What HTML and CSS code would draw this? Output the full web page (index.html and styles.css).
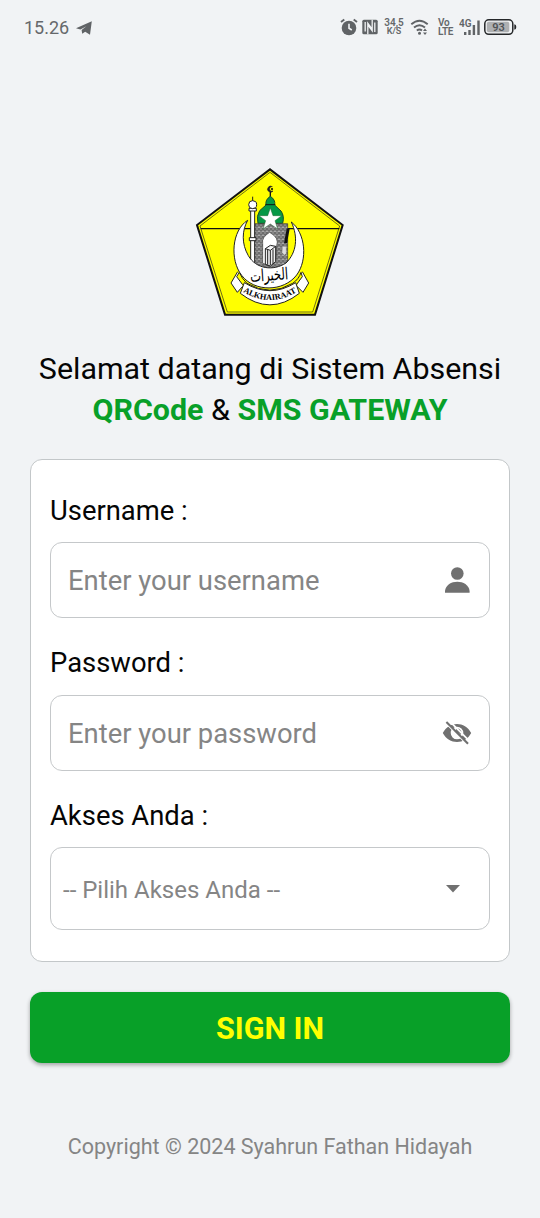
FILE: index.html
```html
<!DOCTYPE html>
<html lang="id">
<head>
<meta charset="utf-8">
<title>Sistem Absensi</title>
<link rel="stylesheet" href="styles.css">
</head>
<body>
<header class="status">
  <span class="clock">15.26</span>
  <svg class="plane" width="16" height="14" viewBox="0 0 16 14"><path d="M15.8 .3 14 13.7 9.2 10.7 6.2 12.8 5.6 9 10.4 5.3 4.4 8.6 0 7.2Z"/></svg>
  <div class="status-icons">
    <svg width="18" height="18" viewBox="0 0 18 18"><circle cx="9" cy="10" r="7.3"/><path class="line" d="M1 4 4.3 1.4M17 4 13.7 1.4"/><path class="cut" d="M9 5.8V10.3L11.8 12"/></svg>
    <svg class="nfc" width="16" height="16" viewBox="0 0 16 16"><rect x=".3" y=".8" width="15.4" height="14.4" rx="1.5"/><path class="cut thin" d="M5.8 15.2V4.2L10 10M3.2 3V12.6M10.2 .8V11.8L6 6M12.8 3.4V13"/></svg>
    <span class="speed"><b>34,5</b><b class="unit">K/S</b></span>
    <svg class="wifi" width="20" height="17" viewBox="0 0 20 17"><path class="line" d="M1.3 5.3Q9.5-1.8 17.7 5.3M4 8.5Q9.5 3.8 15 8.5M6.8 11.5Q9.5 9.5 12 11.5"/><circle cx="9.5" cy="14.2" r="1.5"/><path d="M15 9.5 17 12H13ZM15 16 13 13.5H17Z"/></svg>
    <span class="volte"><b>Vo</b><b>LTE</b></span>
    <svg class="signal" width="22" height="18" viewBox="0 0 22 18"><text x="0" y="9">4G</text><path d="M5 14h2.4v3H5ZM9.3 12h2.4v5H9.3ZM13.7 7H16.1v10h-2.4ZM18.3 2.5h2.4V17h-2.4Z"/></svg>
    <svg class="battery" width="33" height="18" viewBox="0 0 33 18"><rect class="shell" x=".8" y="1.8" width="28" height="14.5" rx="4"/><rect class="charge" x="2.8" y="3.8" width="22.5" height="10.5" rx="2"/><path class="tip" d="M30.3 6.3Q32.3 6.5 32.3 9T30.3 11.7Z"/><text x="14.5" y="13" text-anchor="middle">93</text></svg>
  </div>
</header>
<main class="login">
  <svg class="logo" viewBox="0 0 480 480" role="img" aria-label="Alkhairaat">
    <defs>
      <pattern id="brick" width="12" height="12" patternUnits="userSpaceOnUse"><rect width="12" height="12" fill="#aaa"/><path d="M0 0H12M0 6H12M3 0V6M9 6V12" stroke="#333" stroke-width="1.8"/></pattern>
      <path id="motto" d="M151 391Q240 449 328 391"/>
    </defs>
    <path d="M240 28 458 195 375 464H105L21 195Z" fill="#ff0" stroke="#111" stroke-width="6"/>
    <path d="M240 37 449 198 368 456H112L30 198Z" fill="none" stroke="#222" stroke-width="2"/>
    <path d="M32 206H448" stroke="#111" stroke-width="4"/>
    <path d="M247 80A9 9 0 1 0 249 93 7 7 0 1 1 247 80Z" fill="#222" stroke="#222" stroke-width="2"/><circle cx="246" cy="87" r="3"/><path d="M241 96V113" stroke="#111" stroke-width="4"/>
    <path d="M228 135Q225 119 241 109 257 119 254 135L273 153Q284 168 278 190H204Q198 168 209 152Z" fill="#079846" stroke="#174c29" stroke-width="3"/>
    <path d="M226 134H256" stroke="#111" stroke-width="3"/>
    <path d="M195 191H293V324H190Z" fill="url(#brick)" stroke="#333" stroke-width="2"/>
    <path d="m241 144 8 23h26l-20 15 8 25-22-15-22 15 8-25-20-15h26Z" fill="#fff" stroke="#263" stroke-width="1.5"/>
    <path d="M239 217Q269 234 260 257L256 307 242 318 218 310V251Q214 232 239 217Z" fill="#fff" stroke="#333" stroke-width="2"/>
    <path d="m226 266 15-10 16 3v46l-16 13-15-5ZM226 266l15 5 16-12M241 271v44M233 268v46M249 268v44" fill="#eee" stroke="#222" stroke-width="3"/>
    <path d="M290 206H299L291 250H282Z" fill="#111"/><path d="M277 259H289V280L283 286 276 278Z" fill="#ddd" stroke="#555"/>
    <path d="M182 151H194V324H182Z" fill="#fff" stroke="#222" stroke-width="3"/>
    <path d="M188 110V125M177 145H199V153H177ZM178 233H198V242H178Z" fill="#fff" stroke="#222" stroke-width="3"/><circle cx="188" cy="134" r="12" fill="#fff" stroke="#222" stroke-width="3"/>
    <path d="M143 335 123 369 142 397 158 379M337 335 356 369 339 397 321 379" fill="#fff" stroke="#222" stroke-width="3"/>
    <path d="M148 337Q156 357 171 370 239 411 308 370 327 357 333 337L337 350 320 373Q239 425 157 373L140 350Z" fill="#ff0" stroke="#222" stroke-width="3"/>
    <path d="M173 181C125 211 119 300 155 346 193 397 281 396 320 345 354 299 346 219 304 186 325 231 320 278 288 309 250 334 198 327 175 287 154 251 156 211 173 181Z" fill="#fff" stroke="#222" stroke-width="3"/>
    <path d="M163 368Q240 416 317 368L328 400Q240 469 151 400Z" fill="#fff" stroke="#222" stroke-width="3"/>
    <text class="arabic" x="238" y="362" text-anchor="middle" textLength="114" lengthAdjust="spacingAndGlyphs" transform="rotate(-4 238 355)">الخيرات</text>
    <text class="motto"><textPath href="#motto" startOffset="50%" text-anchor="middle">ALKHAIRAAT</textPath></text>
  </svg>
  <h1 class="welcome"><span class="welcome-line">Selamat datang di Sistem Absensi</span><span class="product"><strong>QRCode</strong> &amp; <strong>SMS GATEWAY</strong></span></h1>
  <form class="card">
    <div class="label">Username :</div>
    <div class="field"><span class="username">Enter your username</span><svg width="30" height="30" viewBox="0 0 30 30"><circle cx="15.3" cy="8.5" r="6.3"/><path d="M3 27.8V26C3.7 19.8 9.3 16.7 15.3 16.7S26.9 19.8 27.6 26V27.8Z"/></svg></div>
    <div class="label">Password :</div>
    <div class="field"><span class="password">Enter your password</span><svg width="30" height="30" viewBox="0 0 30 30"><path fill-rule="evenodd" d="M.8 15C7 3 23 3 29.2 15 23 27 7 27 .8 15ZM15 8.7A6.3 6.3 0 1 0 15 21.3 6.3 6.3 0 1 0 15 8.7Z"/><path d="M15 10.5A4.5 4.5 0 0 1 19.5 15.5L17.8 17.3Q18 15 15.5 14.5 13.5 13.8 14 10.6Z"/><path class="gap" d="M3 4.2 25.5 26.7M5.8 1.4 28.3 23.9"/><path class="slash" d="M4.4 4.1 26 25.7"/></svg></div>
    <div class="label">Akses Anda :</div>
    <div class="field select"><span class="choice">-- Pilih Akses Anda --</span><svg width="14" height="8" viewBox="0 0 14 8"><path d="M0 0H14L7 7.5Z"/></svg></div>
  </form>
  <button class="submit" type="button">SIGN IN</button>
  <footer class="copyright">Copyright © 2024 Syahrun Fathan Hidayah</footer>
</main>
</body>
</html>
```
FILE: styles.css
```css
* { box-sizing: border-box; }
body { margin: 0; height: 1218px; background: #f1f3f5; font-family: Roboto, sans-serif; color: #050505; }
svg { display: block; }
.status { height: 56px; display: flex; align-items: center; padding: 0 23px 2px 24px; color: #65686b; fill: #606366; }
.clock { font-size: 18px; padding-top: 1px; }
.plane { margin: 1px 0 0 7px; }
.status-icons { display: flex; align-items: center; margin-left: auto; }
.line { fill: none; stroke: #606366; stroke-width: 1.9; }
.cut { fill: none; stroke: #f1f3f5; stroke-width: 1.6; }
.thin { stroke-width: 1.3; }
.nfc { margin-left: 4px; }
.speed, .volte { display: grid; text-align: center; font-size: 10px; line-height: 9px; font-weight: 600; }
.speed b, .volte b { font-weight: 600; }
.speed { margin-left: 6px; width: 20px; }
.speed .unit { font-size: 9px; }
.wifi { margin-left: 6px; }
.volte { margin-left: 8px; width: 16px; text-align: left; letter-spacing: -.3px; }
.signal { margin-left: 5px; }
.signal text { font-size: 10px; font-weight: 600; }
.battery { margin-left: 3px; }
.shell { fill: #f1f3f5; stroke: #252729; stroke-width: 1.5; }
.charge { fill: #aeb0b2; }
.tip { fill: #252729; }
.battery text { font-size: 11px; font-weight: 600; fill: #505356; }
.login { padding: 104px 30px 0; display: flex; flex-direction: column; align-items: center; }
.logo { width: 160px; height: 160px; }
.arabic { font: 50px "DejaVu Sans", sans-serif; }
.motto { font: bold 25px "Liberation Serif", serif; }
.welcome { margin: 28px 0 0; font-size: 30.4px; line-height: 41px; font-weight: 400; display: grid; text-align: center; white-space: nowrap; }
.welcome strong { color: #08a028; font-weight: 700; }
.card { width: 480px; height: 503px; margin-top: 29px; padding: 30px 19px 0; border: 1px solid #c3c7c9; border-radius: 12px; background: #fff; }
.label { height: 52px; padding-top: 0.5px; font-size: 27.4px; line-height: 41px; }
.field { height: 76px; margin-bottom: 24.5px; padding: 0 17px; border: 1px solid #c5c8ca; border-radius: 12px; display: flex; align-items: center; justify-content: space-between; color: #858585; font-size: 27.4px; fill: #707070; white-space: nowrap; }
.gap { stroke: #fff; stroke-width: 1.8; fill: none; }
.slash { stroke: #707070; stroke-width: 2.1; fill: none; }
.username, .password { padding-top: 2px; }
.select { height: 83px; padding: 1px 29px 0 12px; font-size: 24px; }
.choice { padding-top: 1px; }
.submit { width: 480px; height: 71px; margin-top: 30px; border: 0; border-radius: 12px; background: #08a028; color: #ff0; font: 700 30.5px Roboto, sans-serif; padding: 2px 0 0; box-shadow: 0 2px 4px #0005; }
.copyright { margin-top: 69px; font-size: 21.5px; line-height: 30px; color: #858585; white-space: nowrap; }
```
